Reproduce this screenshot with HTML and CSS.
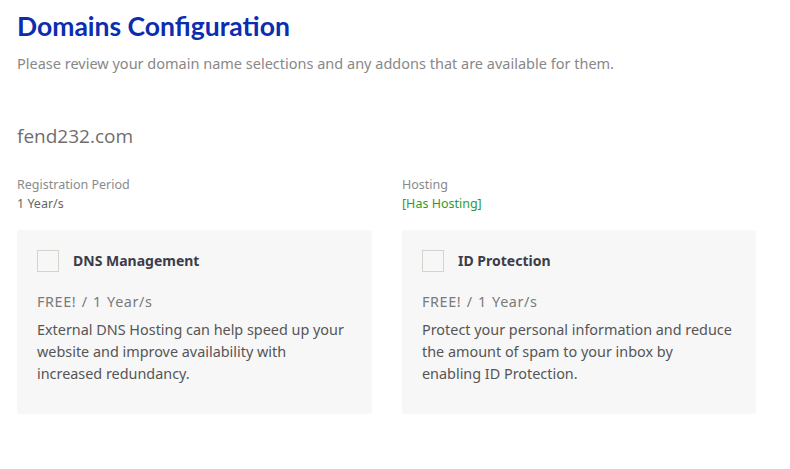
FILE: index.html
```html
<!DOCTYPE html>
<html>
<head>
<meta charset="utf-8">
<link rel="stylesheet" href="styles.css">
</head>
<body>
<div class="page">
  <h1 class="title">Domains Configuration</h1>
  <p class="subtitle">Please review your domain name selections and any addons that are available for them.</p>
  <h2 class="domain">fend232.com</h2>
  <div class="grid">
    <div class="field">
      <div class="label">Registration Period</div>
      <div class="value">1 Year/s</div>
    </div>
    <div class="field">
      <div class="label">Hosting</div>
      <div class="value green">[Has Hosting]</div>
    </div>
    <div class="card">
      <div class="card-head"><span class="check"></span><span class="card-title">DNS Management</span></div>
      <div class="price">FREE! / 1 Year/s</div>
      <p class="desc">External DNS Hosting can help speed up your website and improve availability with increased redundancy.</p>
    </div>
    <div class="card">
      <div class="card-head"><span class="check"></span><span class="card-title">ID Protection</span></div>
      <div class="price">FREE! / 1 Year/s</div>
      <p class="desc">Protect your personal information and reduce the amount of spam to your inbox by enabling ID Protection.</p>
    </div>
  </div>
</div>
</body>
</html>
```
FILE: styles.css
```css
html, body { margin: 0; padding: 0; background: #fff; }
body { font-family: "Noto Sans", "Open Sans", sans-serif; }
.page { padding: 8px 34px 0 17px; }
.title {
  margin: 0;
  font-family: "Lato", sans-serif;
  font-weight: 700;
  font-size: 26.5px;
  line-height: 36px;
  color: #0b2db0;
}
.subtitle {
  margin: 9px 0 0 0;
  font-size: 14.5px;
  line-height: 20px;
  color: #888;
}
.domain {
  margin: 50px 0 0 0;
  font-family: "Open Sans", sans-serif;
  font-weight: 400;
  font-size: 19px;
  line-height: 26px;
  color: #6e6e6e;
}
.grid {
  display: grid;
  grid-template-columns: 355px 354px;
  column-gap: 30px;
  margin-top: 26px;
}
.field { font-size: 12.5px; line-height: 19px; }
.label { color: #8a8a8a; }
.value { color: #666; }
.value.green { color: #2e9d1f; }
.card {
  margin-top: 17px;
  background: #f7f7f7;
  border-radius: 3px;
  padding: 20px 22px 0 20px;
  height: 184px;
  box-sizing: border-box;
}
.card-head { display: flex; align-items: center; gap: 14px; height: 22px; }
.check {
  width: 20px; height: 20px;
  border: 1px solid #d6d3cc;
  background: #f7f7f7;
  flex: none;
}
.card-title { font-weight: 700; font-size: 14px; line-height: 22px; color: #3c3c4a; }
.price { margin-top: 20px; font-size: 14.4px; word-spacing: 1px; letter-spacing: 0.6px; color: #7a7a7a; line-height: 20px; }
.desc { margin: 7px 0 0 0; font-size: 14.4px; line-height: 22px; color: #555; }
```
